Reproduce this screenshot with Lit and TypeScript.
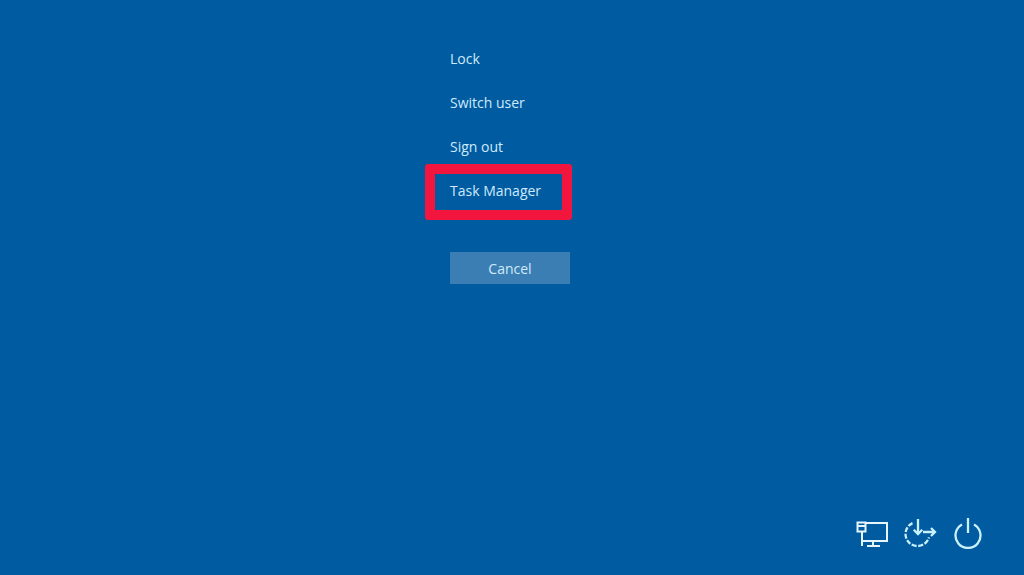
import { LitElement, html, css } from "lit";
import { customElement } from "lit/decorators.js";

@customElement("app-root")
export class AppRoot extends LitElement {
  static styles = css`
    :host {
      display: flex;
      flex-direction: column;
      width: 1024px;
      height: 575px;
      overflow: hidden;
      background: #005ba1;
      font-family: "Open Sans", "Noto Sans", "Liberation Sans", sans-serif;
      color: #cfeafa;
    }
    .center {
      flex: 1;
      display: flex;
      flex-direction: column;
      padding: 37px 0 0 450px;
    }
    .item {
      height: 44px;
      line-height: 44px;
      font-size: 14px;
      width: max-content;
    }
    .highlight {
      position: relative;
    }
    .highlight::after {
      content: "";
      position: absolute;
      left: -25px;
      top: -5px;
      width: 147px;
      height: 56px;
      box-sizing: border-box;
      border: 10px solid #f2163e;
      border-radius: 3px;
    }
    .cancel {
      margin-top: 39px;
      width: 120px;
      height: 32px;
      line-height: 33px;
      text-align: center;
      font-size: 14px;
      background: #3b7eb3;
    }
    .tray {
      display: flex;
      justify-content: flex-end;
      align-items: center;
      gap: 16px;
      padding: 0 42px 26px 0;
    }
    svg {
      display: block;
      fill: none;
      stroke: #e6f6fc;
      stroke-width: 2;
    }
    .cyan {
      stroke: #c8f1f8;
      stroke-width: 2.3;
    }
  `;

  render() {
    return html`
      <div class="center">
        <div class="item">Lock</div>
        <div class="item">Switch user</div>
        <div class="item">Sign out</div>
        <div class="item highlight">Task Manager</div>
        <div class="cancel">Cancel</div>
      </div>
      <div class="tray">
        <svg width="32" height="31" viewBox="0 0 32 31">
          <path d="M9 5h22v18H7" />
          <path d="M1.5 4.5h8v9h-8z" />
          <path d="M1.5 8h8" />
          <path d="M6 13.5V28" />
          <path d="M17 23v5M11 28h13" />
        </svg>
        <svg class="cyan" width="34" height="31" viewBox="0 0 34 31">
          <path d="M8.5 5.1A12 12 0 1 0 25 19.4" stroke-dasharray="5 1.6" />
          <path d="M14 1v15M9.8 11.8l4.2 4.2 4.2-4.2" />
          <path d="M19 14h12M27 10l4 4-4 4" />
        </svg>
        <svg class="cyan" width="28" height="31" viewBox="0 0 28 31">
          <path d="M8 6.5a12.5 12.5 0 1 0 12 0" />
          <path d="M14 0v15" />
        </svg>
      </div>
    `;
  }
}
